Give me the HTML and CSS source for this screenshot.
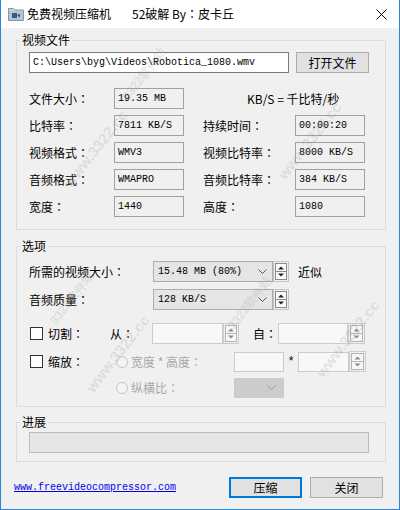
FILE: index.html
```html
<!DOCTYPE html>
<html>
<head>
<meta charset="utf-8">
<link rel="stylesheet" href="styles.css">
</head>
<body>
<div class="window">
  <div class="titlebar">
    <svg class="app-icon" width="16" height="14" viewBox="0 0 16 14">
      <path d="M0.5 1.5h5l1.5 1.5h8.5v10.5h-15z" fill="#c9d3dc" stroke="#8797a6"/>
      <rect x="1" y="4" width="14" height="9" fill="#b7c4cf"/>
      <rect x="4" y="6" width="5" height="5" fill="#2d5f8e"/>
      <path d="M9 8.5l3-2v4z" fill="#2d5f8e"/>
    </svg>
    <span class="title">免费视频压缩机</span>
    <span class="title title-by">52破解 By<span class="c">：</span>皮卡丘</span>
    <svg class="close" width="11" height="11" viewBox="0 0 11 11">
      <path d="M0.5 0.5l10 10M10.5 0.5l-10 10" stroke="#000" stroke-width="1"/>
    </svg>
  </div>

  <div class="content">
    <div class="group g1">
      <div class="group-title">视频文件</div>
      <div class="file-row">
        <div class="path-input">C:\Users\byg\Videos\Robotica_1080.wmv</div>
        <div class="btn open-btn">打开文件</div>
      </div>
      <div class="info-grid">
        <div class="lbl">文件大小<span class="c">：</span></div>
        <div class="box">19.35 MB</div>
        <div class="note">KB/S = 千比特/秒</div>

        <div class="lbl">比特率<span class="c">：</span></div>
        <div class="box">7811 KB/S</div>
        <div class="lbl">持续时间<span class="c">：</span></div>
        <div class="box">00:00:20</div>

        <div class="lbl">视频格式<span class="c">：</span></div>
        <div class="box">WMV3</div>
        <div class="lbl">视频比特率<span class="c">：</span></div>
        <div class="box">8000 KB/S</div>

        <div class="lbl">音频格式<span class="c">：</span></div>
        <div class="box">WMAPRO</div>
        <div class="lbl">音频比特率<span class="c">：</span></div>
        <div class="box">384 KB/S</div>

        <div class="lbl">宽度<span class="c">：</span></div>
        <div class="box">1440</div>
        <div class="lbl">高度<span class="c">：</span></div>
        <div class="box">1080</div>
      </div>
    </div>

    <div class="group g2">
      <div class="group-title">选项</div>
      <div class="opt-row row-a">
        <div class="opt-lbl">所需的视频大小<span class="c">：</span></div>
        <div class="combo"><span>15.48 MB (80%)</span>
          <svg class="chev" width="9" height="6" viewBox="0 0 9 6"><path d="M0.5 0.5l4 4 4-4" fill="none" stroke="#555"/></svg>
        </div>
        <svg class="spin" width="16" height="21" viewBox="0 0 16 21">
          <rect x="0.5" y="0.5" width="15" height="20" fill="#f0f0f0" stroke="#c4c4c4"/>
          <rect x="2.5" y="2.5" width="11" height="16" fill="#fafafa" stroke="#8a8a8a"/>
          <path d="M2.5 10.5h11" stroke="#8a8a8a"/>
          <path d="M5 8.5h6l-3-3z" fill="#222"/>
          <path d="M5 12.5h6l-3 3z" fill="#222"/>
        </svg>
        <span class="approx">近似</span>
      </div>
      <div class="opt-row row-b">
        <div class="opt-lbl">音频质量<span class="c">：</span></div>
        <div class="combo"><span>128 KB/S</span>
          <svg class="chev" width="9" height="6" viewBox="0 0 9 6"><path d="M0.5 0.5l4 4 4-4" fill="none" stroke="#555"/></svg>
        </div>
        <svg class="spin" width="16" height="21" viewBox="0 0 16 21">
          <rect x="0.5" y="0.5" width="15" height="20" fill="#f0f0f0" stroke="#c4c4c4"/>
          <rect x="2.5" y="2.5" width="11" height="16" fill="#fafafa" stroke="#8a8a8a"/>
          <path d="M2.5 10.5h11" stroke="#8a8a8a"/>
          <path d="M5 8.5h6l-3-3z" fill="#222"/>
          <path d="M5 12.5h6l-3 3z" fill="#222"/>
        </svg>
      </div>
      <div class="opt-row row-c">
        <div class="chk-wrap w-cut"><span class="chk"></span><span>切割<span class="c">：</span></span></div>
        <div class="from">从<span class="c">：</span></div>
        <div class="dis-input w-from"></div>
        <svg class="spin" width="16" height="21" viewBox="0 0 16 21">
          <rect x="0.5" y="0.5" width="15" height="20" fill="#f0f0f0" stroke="#cccccc"/>
          <rect x="2.5" y="2.5" width="11" height="16" fill="#f7f7f7" stroke="#b4b4b4"/>
          <path d="M2.5 10.5h11" stroke="#b4b4b4"/>
          <path d="M5 8.5h6l-3-3z" fill="#8c8c8c"/>
          <path d="M5 12.5h6l-3 3z" fill="#8c8c8c"/>
        </svg>
        <div class="to">自<span class="c">：</span></div>
        <div class="dis-input w-to"></div>
        <svg class="spin" width="17" height="21" viewBox="0 0 17 21">
          <rect x="0.5" y="0.5" width="16" height="20" fill="#f0f0f0" stroke="#cccccc"/>
          <rect x="2.5" y="2.5" width="12" height="16" fill="#f7f7f7" stroke="#b4b4b4"/>
          <path d="M2.5 10.5h12" stroke="#b4b4b4"/>
          <path d="M5.5 8.5h6l-3-3z" fill="#8c8c8c"/>
          <path d="M5.5 12.5h6l-3 3z" fill="#8c8c8c"/>
        </svg>
      </div>
      <div class="opt-row row-d">
        <div class="chk-wrap w-scale"><span class="chk"></span><span>缩放<span class="c">：</span></span></div>
        <div class="radio-wrap"><span class="radio"></span><span>宽度 * 高度<span class="c">：</span></span></div>
        <div class="dis-input w-w"></div>
        <div class="star">*</div>
        <div class="dis-input w-h"></div>
        <svg class="spin" width="17" height="21" viewBox="0 0 17 21">
          <rect x="0.5" y="0.5" width="16" height="20" fill="#f0f0f0" stroke="#cccccc"/>
          <rect x="2.5" y="2.5" width="12" height="16" fill="#f7f7f7" stroke="#b4b4b4"/>
          <path d="M2.5 10.5h12" stroke="#b4b4b4"/>
          <path d="M5.5 8.5h6l-3-3z" fill="#8c8c8c"/>
          <path d="M5.5 12.5h6l-3 3z" fill="#8c8c8c"/>
        </svg>
      </div>
      <div class="opt-row row-e">
        <div class="radio-wrap"><span class="radio"></span><span>纵横比<span class="c">：</span></span></div>
        <div class="dis-combo">
          <svg class="chev" width="9" height="6" viewBox="0 0 9 6"><path d="M0.5 0.5l4 4 4-4" fill="none" stroke="#9a9a9a"/></svg>
        </div>
      </div>
    </div>

    <div class="group g3">
      <div class="group-title">进展</div>
      <div class="progress"></div>
    </div>
  </div>

  <div class="footer">
    <a class="link" href="#">www.freevideocompressor.com</a>
    <div class="btn compress-btn">压缩</div>
    <div class="btn close-btn">关闭</div>
  </div>

  <div class="wm wm1">www.3322.cc</div>
  <div class="wm wm2">3322软件站</div>
  <div class="wm wm3">www.3322.cc</div>
  <div class="wm wm4">3322软件站</div>
  <div class="wm wm5">www.3322.cc</div>
  <div class="wm wm6">3322软件站</div>
  <div class="wm wm7">www.3322.cc</div>
</div>
</body>
</html>
```

FILE: styles.css
```css
* { box-sizing: border-box; }
body {
  margin: 0;
  font-family: "Noto Sans CJK SC", "Microsoft YaHei", sans-serif;
  font-size: 12px;
  color: #000;
}
.c { font-family: "Noto Sans CJK TC", sans-serif; }
.window {
  position: relative;
  width: 400px;
  height: 510px;
  border: 1px solid #2b87d3;
  border-top: none;
  background: #f0f0f0;
  overflow: hidden;
}
.titlebar {
  height: 28px;
  background: #fff;
  display: flex;
  align-items: center;
  padding-left: 7px;
}
.app-icon { flex: none; }
.title { margin-left: 3px; line-height: 14px; }
.title-by { margin-left: 21px; }
.close { margin-left: auto; margin-right: 12px; }

.content { padding: 0 13px 0 15px; }
.group {
  border: 1px solid #dcdcdc;
  padding: 0 16px 12px 12px;
}
.group-title {
  width: fit-content;
  margin: -8px 0 0 -9px;
  padding: 0 2px;
  background: #f0f0f0;
  line-height: 14px;
  height: 14px;
}
.g1 { margin-top: 12px; }
.g2 { margin-top: 16px; padding-bottom: 8px; }
.g3 { margin-top: 15px; padding-bottom: 8px; }

.file-row {
  display: flex;
  gap: 7px;
  margin-top: 5px;
  height: 21px;
}
.path-input {
  width: 260px;
  height: 21px;
  background: #fff;
  border: 1px solid #7a7a7a;
  font-family: "Liberation Mono", monospace;
  font-size: 10px;
  line-height: 19px;
  padding-left: 3px;
}
.btn {
  height: 21px;
  background: #e1e1e1;
  border: 1px solid #adadad;
  display: flex;
  align-items: center;
  justify-content: center;
  line-height: 14px;
}
.open-btn { width: 73px; }

.info-grid {
  margin-top: 15px;
  display: grid;
  grid-template-columns: 85px 89px 92px 70px;
  grid-auto-rows: 21px;
  row-gap: 6px;
  align-items: center;
}
.lbl { line-height: 14px; white-space: nowrap; }
.box {
  width: 70px;
  height: 21px;
  border: 1px solid #a0a0a0;
  background: #f0f0f0;
  font-family: "Liberation Mono", monospace;
  font-size: 10px;
  line-height: 19px;
  padding-left: 3px;
  white-space: nowrap;
}
.note {
  grid-column: 3 / 5;
  padding-left: 44px;
  line-height: 14px;
}

.opt-row {
  display: flex;
  align-items: center;
  height: 21px;
}
.row-a { margin-top: 8px; }
.row-b { margin-top: 7px; }
.row-c { margin-top: 13px; }
.row-d { margin-top: 7px; }
.row-e { margin-top: 6px; padding-left: 87px; height: 20px; }
.opt-lbl { width: 124px; line-height: 14px; white-space: nowrap; }
.combo {
  width: 120px;
  height: 21px;
  background: #e5e5e5;
  border: 1px solid #adadad;
  display: flex;
  align-items: center;
  padding: 0 5px 0 4px;
  font-family: "Liberation Mono", monospace;
  font-size: 10px;
}
.combo span { flex: 1; }
.spin { flex: none; display: block; }
.approx { margin-left: 9px; line-height: 14px; }

.chk-wrap { display: flex; align-items: center; line-height: 14px; white-space: nowrap; }
.w-cut { width: 81px; }
.w-scale { width: 87px; }
.chk {
  flex: none;
  width: 13px;
  height: 13px;
  border: 1px solid #333;
  background: #fff;
  margin-left: 1px;
  margin-right: 5px;
}
.from { width: 42px; line-height: 14px; white-space: nowrap; }
.to { width: 25px; margin-left: 14px; line-height: 14px; white-space: nowrap; }
.dis-input {
  height: 21px;
  background: #f8f8f8;
  border: 1px solid #cccccc;
}
.w-from { width: 71px; }
.w-to { width: 70px; }
.w-w { width: 50px; height: 20px; }
.w-h { width: 51px; height: 20px; }
.radio-wrap {
  width: 118px;
  display: flex;
  align-items: center;
  color: #a8a8a8;
  line-height: 14px;
  white-space: nowrap;
}
.radio {
  flex: none;
  width: 12px;
  height: 12px;
  border-radius: 50%;
  border: 1px solid #c6c6c6;
  background: #f4f4f4;
  margin-right: 3px;
}
.star {
  width: 14px;
  text-align: center;
  font-family: "Liberation Mono", monospace;
  font-size: 12px;
}
.dis-combo {
  width: 50px;
  height: 20px;
  background: #cccccc;
  border: 1px solid #cccccc;
  display: flex;
  align-items: center;
  justify-content: flex-end;
  padding-right: 7px;
}

.progress {
  margin-top: 3px;
  height: 21px;
  background: #e6e6e6;
  border: 1px solid #bcbcbc;
}

.footer {
  display: flex;
  align-items: center;
  margin-top: 15px;
  padding: 0 16px 0 13px;
  height: 21px;
}
.link {
  font-family: "Liberation Mono", monospace;
  font-size: 10px;
  color: #0000ee;
  text-decoration: underline;
  margin-right: auto;
}
.compress-btn {
  width: 73px;
  border: 2px solid #0078d7;
}
.close-btn { width: 73px; margin-left: 8px; }

.wm {
  position: absolute;
  font-family: "Liberation Sans", sans-serif;
  font-size: 15px;
  font-weight: bold;
  color: rgba(150, 150, 150, 0.22);
  transform: rotate(-52deg);
  white-space: nowrap;
  pointer-events: none;
}
.wm1 { left: 48px; top: 140px; }
.wm2 { left: 40px; top: 290px; font-size: 12px; }
.wm3 { left: 262px; top: 132px; }
.wm4 { left: 218px; top: 295px; font-size: 12px; }
.wm5 { left: 70px; top: 345px; }
.wm6 { left: 112px; top: 66px; font-size: 12px; }
.wm7 { left: 300px; top: 330px; }
```
